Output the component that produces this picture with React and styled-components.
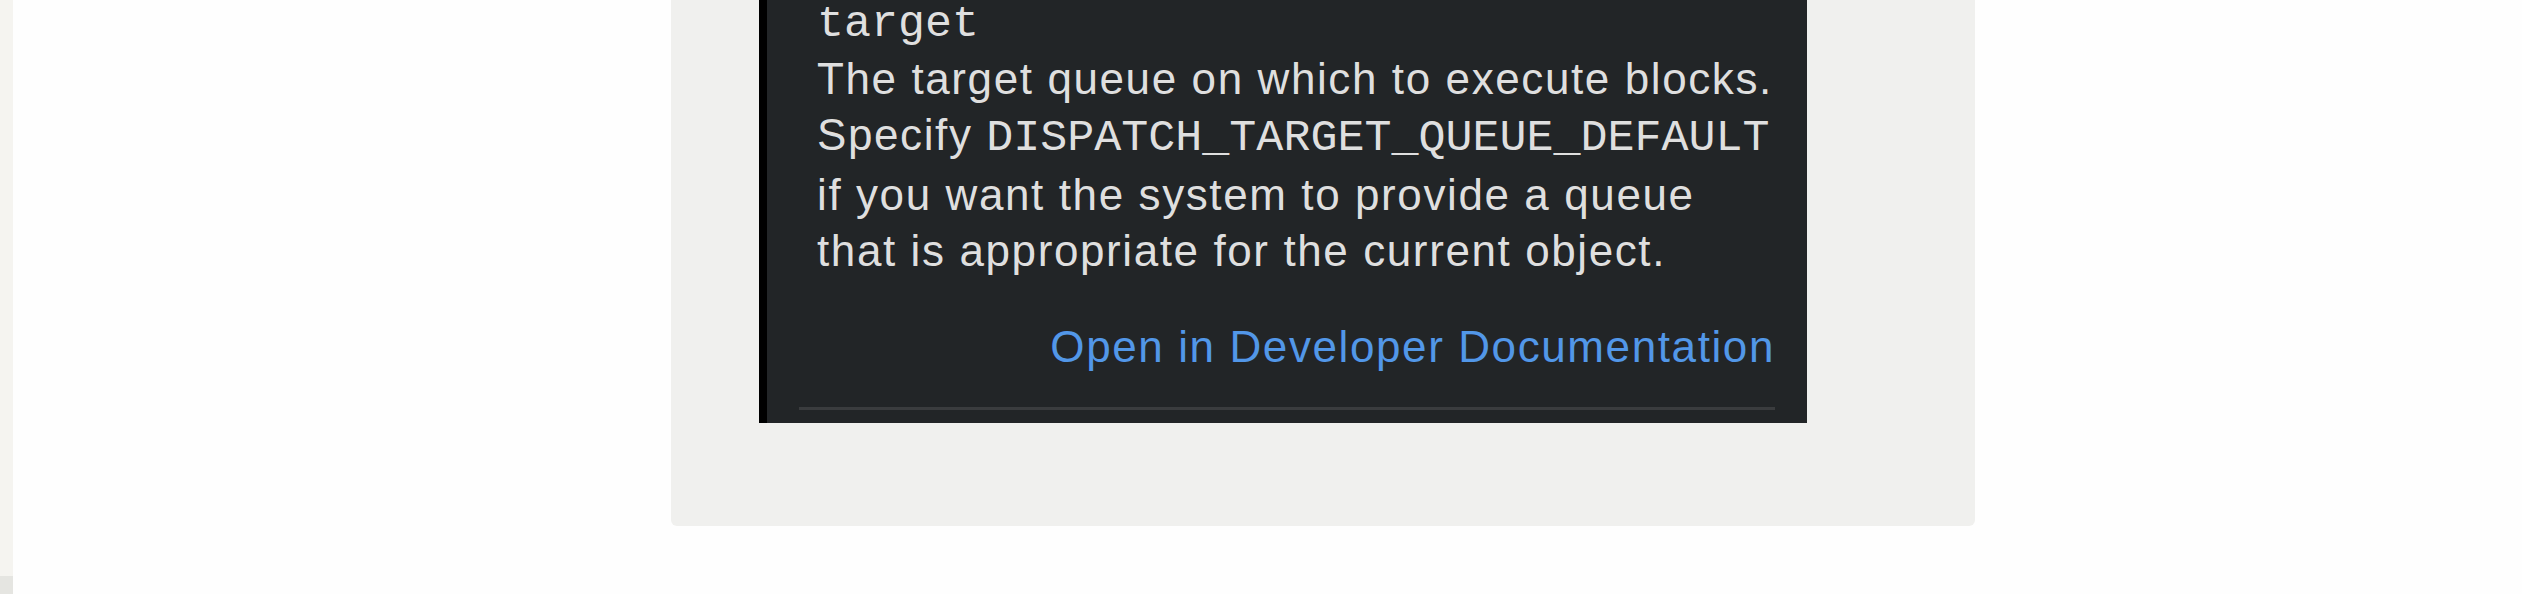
import React from "react"
import styled, { createGlobalStyle } from "styled-components"

const GlobalStyle = createGlobalStyle`
  html, body {
    margin: 0;
    padding: 0;
    background: #fefefe;
  }
  #root {
    height: 594px;
    overflow: hidden;
  }
`

const Page = styled.div`
  display: flex;
  height: 594px;
`

const SideStrip = styled.aside`
  display: flex;
  flex-direction: column;
  justify-content: flex-end;
  width: 13px;
  flex: 0 0 13px;
  background: #f5f4f0;
`

const SideFoot = styled.div`
  height: 18px;
  background: #e5e5e1;
`

const Main = styled.main`
  flex: 1;
  padding-left: 658px;
`

const Figure = styled.div`
  width: 1304px;
  padding: 0 168px 103px 88px;
  box-sizing: border-box;
  background: #f0f0ee;
  border-radius: 0 0 6px 6px;
`

const QuickHelp = styled.div`
  display: flex;
  flex-direction: column;
  width: 1048px;
  box-sizing: border-box;
  padding: 0 32px 13px 50px;
  background: #222527;
  border-left: 8px solid #000;
  color: #dfdfdf;
  font-family: "Liberation Sans", Arial, sans-serif;
  font-size: 44px;
  letter-spacing: 1.6px;
`

const ParamName = styled.div`
  padding-top: 2px;
  font-family: "Liberation Mono", "Courier New", monospace;
  font-size: 45px;
  line-height: 46px;
  letter-spacing: 0;
`

const Description = styled.p`
  margin: 3px 0 0;
  line-height: 56px;
  white-space: nowrap;
`

const Code = styled.code`
  font-family: "Liberation Mono", "Courier New", monospace;
  font-size: 45px;
  letter-spacing: 0;
`

const DocLink = styled.a`
  align-self: flex-end;
  margin-top: 40px;
  line-height: 56px;
  color: #5297e8;
  text-decoration: none;
  cursor: pointer;
`

const Divider = styled.hr`
  margin: 32px 0 0 -18px;
  height: 3px;
  border: 0;
  background: #3a3c3e;
`

export default function App() {
  return (
    <>
      <GlobalStyle />
      <Page>
        <SideStrip>
          <SideFoot />
        </SideStrip>
        <Main>
          <Figure>
            <QuickHelp>
              <ParamName>target</ParamName>
              <Description>
                The target queue on which to execute blocks.
                <br />
                Specify <Code>DISPATCH_TARGET_QUEUE_DEFAULT</Code>
                <br />
                if you want the system to provide a queue
                <br />
                that is appropriate for the current object.
              </Description>
              <DocLink>Open in Developer Documentation</DocLink>
              <Divider />
            </QuickHelp>
          </Figure>
        </Main>
      </Page>
    </>
  )
}
